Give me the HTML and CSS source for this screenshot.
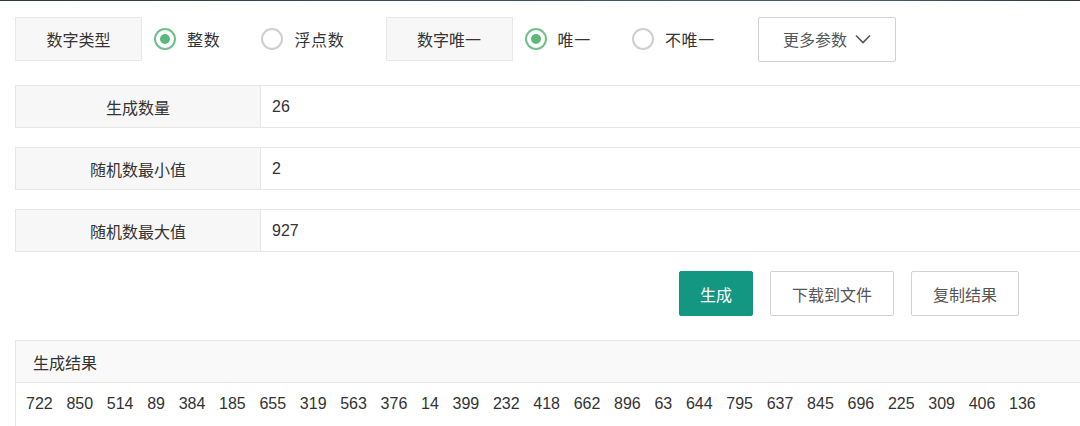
FILE: index.html
```html
<!DOCTYPE html>
<html lang="zh">
<head>
<meta charset="utf-8">
<title>随机数生成</title>
<link rel="stylesheet" href="styles.css">
</head>
<body>
<div class="topstrip"></div>
<div class="page">
  <div class="options">
    <div class="opt-label">数字类型</div>
    <label class="radio checked"><span class="dot"></span><span>整数</span></label>
    <label class="radio"><span class="dot"></span><span>浮点数</span></label>
    <div class="opt-label">数字唯一</div>
    <label class="radio checked"><span class="dot"></span><span>唯一</span></label>
    <label class="radio"><span class="dot"></span><span>不唯一</span></label>
    <button class="more">更多参数<svg class="chev" width="16" height="10" viewBox="0 0 16 10"><path d="M1 1.5 L8 8.5 L15 1.5" fill="none" stroke="#555" stroke-width="1.6"/></svg></button>
  </div>

  <div class="field">
    <div class="field-label">生成数量</div>
    <div class="field-value">26</div>
  </div>
  <div class="field">
    <div class="field-label">随机数最小值</div>
    <div class="field-value">2</div>
  </div>
  <div class="field">
    <div class="field-label">随机数最大值</div>
    <div class="field-value">927</div>
  </div>

  <div class="actions">
    <button class="btn primary">生成</button>
    <button class="btn">下载到文件</button>
    <button class="btn">复制结果</button>
  </div>

  <div class="result">
    <div class="result-head">生成结果</div>
    <div class="result-body">
      <span>722</span><span>850</span><span>514</span><span>89</span><span>384</span><span>185</span><span>655</span><span>319</span><span>563</span><span>376</span><span>14</span><span>399</span><span>232</span><span>418</span><span>662</span><span>896</span><span>63</span><span>644</span><span>795</span><span>637</span><span>845</span><span>696</span><span>225</span><span>309</span><span>406</span><span>136</span>
    </div>
  </div>
</div>
</body>
</html>
```

FILE: styles.css
```css
html, body {
  margin: 0;
  padding: 0;
  background: #fff;
  overflow: hidden;
}
body {
  font-family: "Liberation Sans", "Noto Sans CJK SC", sans-serif;
  font-size: 16px;
  color: #333;
  width: 1080px;
  height: 426px;
}
.topstrip {
  height: 1px;
  background: linear-gradient(90deg, #2c3a44 0%, #3d4f5c 40%, #46606e 80%, #2a3640 100%);
}
.page {
  padding-left: 15px;
  width: 1200px;
}
.options {
  display: flex;
  align-items: center;
  margin-top: 16px;
  height: 44px;
}
.opt-label {
  box-sizing: border-box;
  width: 127px;
  height: 44px;
  display: flex;
  align-items: center;
  justify-content: center;
  background: #f7f7f7;
  border: 1px solid #e8e8e8;
  color: #333;
}
.radio + .opt-label {
  margin-left: 12px;
}
.radio {
  display: flex;
  align-items: center;
  margin: 0 29px 0 12px;
  color: #333;
  letter-spacing: 0.7px;
}
.radio .dot {
  box-sizing: border-box;
  width: 22px;
  height: 22px;
  border-radius: 50%;
  border: 2px solid #cfcfcf;
  margin-right: 11px;
  display: flex;
  align-items: center;
  justify-content: center;
}
.radio.checked .dot {
  border-color: #6fc08a;
}
.radio.checked .dot::after {
  content: "";
  width: 10px;
  height: 10px;
  border-radius: 50%;
  background: #5cb97a;
}
.more {
  box-sizing: border-box;
  margin-left: 14px;
  width: 138px;
  height: 45px;
  background: #fff;
  border: 1px solid #d2d2d2;
  border-radius: 2px;
  font: inherit;
  color: #555;
  display: flex;
  align-items: center;
  justify-content: center;
  padding: 0;
}
.chev {
  margin-left: 8px;
}
.field {
  display: flex;
  height: 43px;
  box-sizing: border-box;
  border: 1px solid #e6e6e6;
  margin-top: 19px;
}
.options + .field {
  margin-top: 24px;
}
.field-label {
  width: 244px;
  background: #f7f7f7;
  border-right: 1px solid #e6e6e6;
  display: flex;
  align-items: center;
  justify-content: center;
  color: #333;
}
.field-value {
  flex: 1;
  display: flex;
  align-items: center;
  padding-left: 11px;
  color: #333;
}
.actions {
  display: flex;
  gap: 17px;
  margin-top: 19px;
  padding-left: 664px;
}
.btn {
  box-sizing: border-box;
  height: 45px;
  padding: 0 21px;
  background: #fff;
  border: 1px solid #d2d2d2;
  border-radius: 2px;
  font: inherit;
  color: #555;
}
.btn.primary {
  background: #139682;
  border-color: #139682;
  color: #fff;
  padding: 0 20px;
}
.result {
  margin-top: 24px;
  border: 1px solid #e6e6e6;
  height: 120px;
}
.result-head {
  height: 41px;
  background: #f9f9f9;
  border-bottom: 1px solid #e6e6e6;
  display: flex;
  align-items: center;
  padding-left: 17px;
  color: #333;
}
.result-body {
  display: flex;
  gap: 13.7px;
  padding: 12px 10px;
  color: #333;
}
```
